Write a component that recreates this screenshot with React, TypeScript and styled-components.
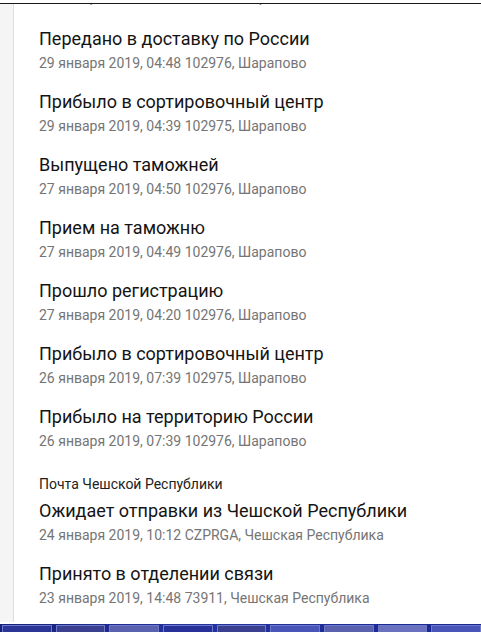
import React from 'react';
import styled, { createGlobalStyle } from 'styled-components';

const GlobalStyle = createGlobalStyle`
  html, body {
    margin: 0;
    padding: 0;
    background: #fff;
  }
  body {
    font-family: Roboto, 'Noto Sans', sans-serif;
  }
`;

interface EventItem {
  title: string;
  date: string;
  place: string;
  operator?: string;
}

const events: EventItem[] = [
  { title: 'Передано в доставку по России', date: '29 января 2019, 04:48', place: '102976, Шарапово' },
  { title: 'Прибыло в сортировочный центр', date: '29 января 2019, 04:39', place: '102975, Шарапово' },
  { title: 'Выпущено таможней', date: '27 января 2019, 04:50', place: '102976, Шарапово' },
  { title: 'Прием на таможню', date: '27 января 2019, 04:49', place: '102976, Шарапово' },
  { title: 'Прошло регистрацию', date: '27 января 2019, 04:20', place: '102976, Шарапово' },
  { title: 'Прибыло в сортировочный центр', date: '26 января 2019, 07:39', place: '102975, Шарапово' },
  { title: 'Прибыло на территорию России', date: '26 января 2019, 07:39', place: '102976, Шарапово' },
  {
    title: 'Ожидает отправки из Чешской Республики',
    date: '24 января 2019, 10:12',
    place: 'CZPRGA, Чешская Республика',
    operator: 'Почта Чешской Республики',
  },
  { title: 'Принято в отделении связи', date: '23 января 2019, 14:48', place: '73911, Чешская Республика' },
];

const Screen = styled.div`
  width: 481px;
  height: 632px;
  display: flex;
  flex-direction: column;
  overflow: hidden;
`;

const TopEdge = styled.div`
  height: 3px;
  background: #fff;
`;

const Window = styled.div`
  flex: 1;
  display: flex;
  border-top: 1px solid #1a1a1a;
  overflow: hidden;
`;

const Gutter = styled.div`
  width: 13px;
  background: #f5f5f5;
  border-right: 1px solid #dedede;
  margin-bottom: 2px;
`;

const Feed = styled.div`
  flex: 1;
  padding-left: 25px;
  overflow: hidden;
`;

// tail of the previous entry, scrolled out above the top edge
const Clipped = styled.div`
  height: 7px;
  overflow: hidden;
  display: flex;
  align-items: flex-end;

  & > div {
    margin-bottom: 3px;
  }
`;

const Item = styled.div<{ withOperator?: boolean }>`
  padding-top: ${(p) => (p.withOperator ? '23px' : '17px')};
`;

const Operator = styled.div`
  font-size: 14px;
  line-height: 18px;
  color: #212121;
  margin-bottom: 7px;
`;

const Title = styled.div`
  font-size: 18px;
  line-height: 22px;
  color: #141414;
  white-space: nowrap;
`;

const Meta = styled.div`
  font-size: 14px;
  line-height: 22px;
  color: #757575;
  margin-top: 2px;
  white-space: nowrap;
`;

const Taskbar = styled.div`
  height: 8px;
  display: flex;
  gap: 4px;
  padding-left: 2px;
  background: linear-gradient(90deg, #16207a, #2533a0 40%, #1a2690);
`;

const TaskIcon = styled.div<{ tone: string }>`
  width: 52px;
  margin-top: 1px;
  background: ${(p) => p.tone};
  border: 1px solid #6c78c8;
  border-bottom: none;
`;

const taskTones = ['#2b3596', '#3a3f8f', '#5a62b0', '#28309a', '#3a3f8f', '#4a55b8', '#5a62b0', '#6a72c0', '#4a55b8'];

const App: React.FC = () => (
  <Screen>
    <GlobalStyle />
    <TopEdge />
    <Window>
      <Gutter />
      <Feed>
        <Clipped>
          <Meta>29 января 2019, 04:48 102976, Шарапово</Meta>
        </Clipped>
        {events.map((e) => (
          <Item key={e.title + e.date} withOperator={!!e.operator}>
            {e.operator && <Operator>{e.operator}</Operator>}
            <Title>{e.title}</Title>
            <Meta>{`${e.date} ${e.place}`}</Meta>
          </Item>
        ))}
      </Feed>
    </Window>
    <Taskbar>
      {taskTones.map((t, i) => (
        <TaskIcon key={i} tone={t} />
      ))}
    </Taskbar>
  </Screen>
);

export default App;
